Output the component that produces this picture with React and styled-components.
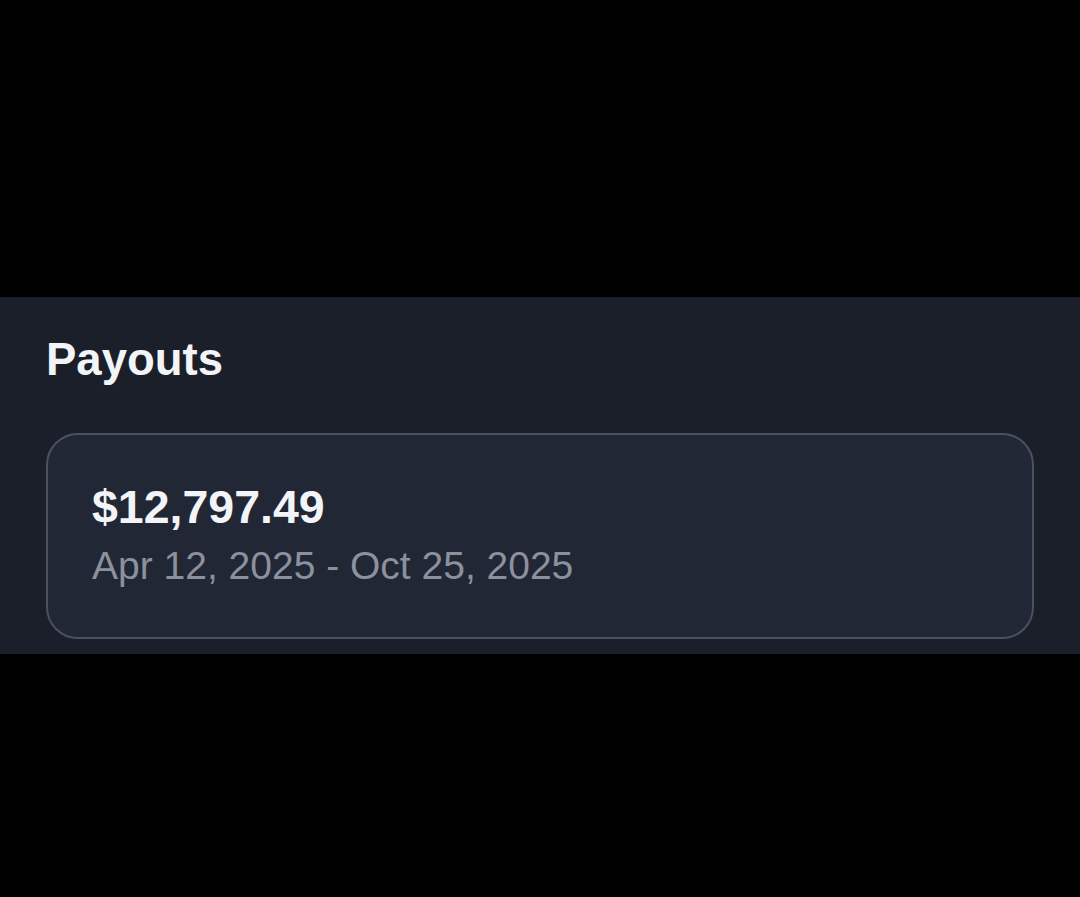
import styled, { createGlobalStyle } from "styled-components"

const Global = createGlobalStyle`
html, body {
    margin: 0;
    padding: 0;
    background-color: #000;
}
body {
    font-family: "Liberation Sans", Arial, sans-serif;
}
`

const Page = styled.div`
min-height: 897px;
padding-top: 297px;
box-sizing: border-box;
background-color: #000;
`

const Panel = styled.section`
background-color: #1a1f29;
padding: 37px 46px 15px 46px;
display: flex;
flex-direction: column;
gap: 47px;
`

const Titulo = styled.h2`
margin: 0;
font-size: 45.5px;
line-height: 52px;
font-weight: 700;
color: #f2f4f7;
`

const Cartao = styled.div`
background-color: #212734;
border: 2px solid #4a5161;
border-radius: 32px;
padding: 45px 44px 48px;
display: flex;
flex-direction: column;
gap: 9px;
`

const Valor = styled.p`
margin: 0;
font-size: 46.5px;
line-height: 54px;
font-weight: 700;
color: #f2f4f7;
`

const Periodo = styled.p`
margin: 0;
font-size: 39px;
line-height: 46px;
color: #8b919d;
`

export default function App() {
    return (
        <Page>
            <Global />
            <Panel>
                <Titulo>Payouts</Titulo>
                <Cartao>
                    <Valor>$12,797.49</Valor>
                    <Periodo>Apr 12, 2025 - Oct 25, 2025</Periodo>
                </Cartao>
            </Panel>
        </Page>
    )
}
